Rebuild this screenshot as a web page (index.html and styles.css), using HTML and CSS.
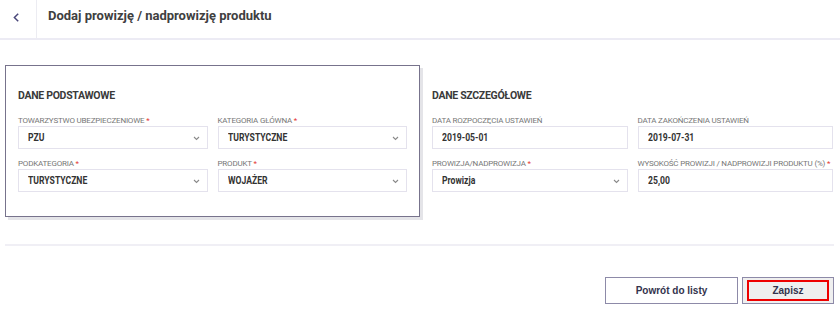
FILE: index.html
```html
<!DOCTYPE html>
<html lang="pl">
<head>
    <meta charset="UTF-8">
    <meta name="viewport" content="width=device-width, initial-scale=1.0">
    <title>Dodaj prowizję / nadprowizję produktu</title>
    <link rel="stylesheet" href="styles.css">
</head>
<body>
    <header class="topbar">
        <a class="back" href="#">
            <svg width="6" height="9" viewBox="0 0 6 9"><path d="M5.2 0.7 L1.4 4.5 L5.2 8.3" fill="none" stroke="#4a477a" stroke-width="1.5"/></svg>
        </a>
        <h1>Dodaj prowizję / nadprowizję produktu</h1>
    </header>

    <main class="content">
        <div class="sections">
            <section class="panel panel-boxed">
                <h3>DANE PODSTAWOWE</h3>
                <div class="grid">
                    <div class="form-group">
                        <label>TOWARZYSTWO UBEZPIECZENIOWE <span class="req">*</span></label>
                        <div class="field"><span>PZU</span><svg class="caret" width="7" height="5" viewBox="0 0 7 5"><path d="M1 1 L3.5 3.5 L6 1" fill="none" stroke="#8a8a8a" stroke-width="1.1"/></svg></div>
                    </div>
                    <div class="form-group">
                        <label>KATEGORIA GŁÓWNA <span class="req">*</span></label>
                        <div class="field"><span>TURYSTYCZNE</span><svg class="caret" width="7" height="5" viewBox="0 0 7 5"><path d="M1 1 L3.5 3.5 L6 1" fill="none" stroke="#8a8a8a" stroke-width="1.1"/></svg></div>
                    </div>
                    <div class="form-group">
                        <label>PODKATEGORIA <span class="req">*</span></label>
                        <div class="field"><span>TURYSTYCZNE</span><svg class="caret" width="7" height="5" viewBox="0 0 7 5"><path d="M1 1 L3.5 3.5 L6 1" fill="none" stroke="#8a8a8a" stroke-width="1.1"/></svg></div>
                    </div>
                    <div class="form-group">
                        <label>PRODUKT <span class="req">*</span></label>
                        <div class="field"><span>WOJAŻER</span><svg class="caret" width="7" height="5" viewBox="0 0 7 5"><path d="M1 1 L3.5 3.5 L6 1" fill="none" stroke="#8a8a8a" stroke-width="1.1"/></svg></div>
                    </div>
                </div>
            </section>

            <section class="panel panel-plain">
                <h3>DANE SZCZEGÓŁOWE</h3>
                <div class="grid">
                    <div class="form-group">
                        <label>DATA ROZPOCZĘCIA USTAWIEŃ</label>
                        <div class="field"><span>2019-05-01</span></div>
                    </div>
                    <div class="form-group">
                        <label>DATA ZAKOŃCZENIA USTAWIEŃ</label>
                        <div class="field"><span>2019-07-31</span></div>
                    </div>
                    <div class="form-group">
                        <label>PROWIZJA/NADPROWIZJA <span class="req">*</span></label>
                        <div class="field"><span>Prowizja</span><svg class="caret" width="7" height="5" viewBox="0 0 7 5"><path d="M1 1 L3.5 3.5 L6 1" fill="none" stroke="#8a8a8a" stroke-width="1.1"/></svg></div>
                    </div>
                    <div class="form-group">
                        <label>WYSOKOŚĆ PROWIZJI / NADPROWIZJI PRODUKTU (%) <span class="req">*</span></label>
                        <div class="field"><span>25,00</span></div>
                    </div>
                </div>
            </section>
        </div>

        <hr class="divider">

        <div class="actions">
            <button class="btn">Powrót do listy</button>
            <button class="btn btn-save"><span>Zapisz</span></button>
        </div>
    </main>
</body>
</html>
```

FILE: styles.css
```css
body {
    margin: 0;
    font-family: Roboto, "Liberation Sans", Arial, sans-serif;
    color: #333;
    background: #fff;
}
.topbar {
    display: flex;
    height: 38px;
    border-bottom: 2px solid #ecebf4;
}
.back {
    width: 37px;
    box-sizing: border-box;
    border-right: 1px solid #ececf2;
    padding: 13px 0 0 13px;
}
.back svg {
    display: block;
}
h1 {
    margin: 0;
    padding: 8px 0 0 11px;
    font-size: 13px;
    line-height: 16px;
    font-weight: bold;
    color: #404040;
}
.content {
    padding: 25px 6px 0 5px;
}
.sections {
    display: grid;
    grid-template-columns: 415px 1fr;
}
.panel {
    border: 1px solid transparent;
    padding: 24px 12px;
}
.panel-boxed {
    border-color: #77738c;
    box-shadow: 3px 3px 0 #e4e4e8;
}
.panel-plain {
    padding: 24px 0 24px 11px;
}
h3 {
    margin: 0 0 13px;
    font-size: 10.5px;
    line-height: 12px;
    font-weight: bold;
    letter-spacing: -0.3px;
    color: #3a3a3a;
}
.grid {
    display: grid;
    grid-template-columns: 1fr 1fr;
    column-gap: 10px;
    row-gap: 9px;
}
label {
    display: block;
    font-size: 8px;
    line-height: 11px;
    letter-spacing: -0.2px;
    color: #777;
    white-space: nowrap;
}
.req {
    color: #e53935;
}
.field {
    height: 23px;
    box-sizing: border-box;
    border: 1px solid #e4e2ed;
    display: flex;
    align-items: center;
    justify-content: space-between;
    padding: 0 7px 0 9px;
    font-weight: bold;
    font-size: 10.5px;
    color: #333;
}
.field span {
    display: inline-block;
    transform: scaleX(0.82);
    transform-origin: left center;
}
.caret {
    display: block;
    margin-top: 2px;
}
.divider {
    border: 0;
    height: 2px;
    background: #f0eff5;
    margin: 27px 0 0;
}
.actions {
    display: flex;
    justify-content: flex-end;
    gap: 4px;
    margin-top: 31px;
}
.btn {
    height: 27px;
    width: 133px;
    border: 1px solid #8d8aa8;
    background: #fff;
    font-family: "Liberation Sans", Arial, sans-serif;
    font-weight: bold;
    font-size: 10px;
    color: #33334d;
    padding: 0;
    cursor: pointer;
}
.btn-save {
    width: 92px;
    padding: 2px 4px;
    background: #efefef;
}
.btn-save span {
    display: flex;
    align-items: center;
    justify-content: center;
    height: 100%;
    box-sizing: border-box;
    border: 2px solid #e00;
}
```
